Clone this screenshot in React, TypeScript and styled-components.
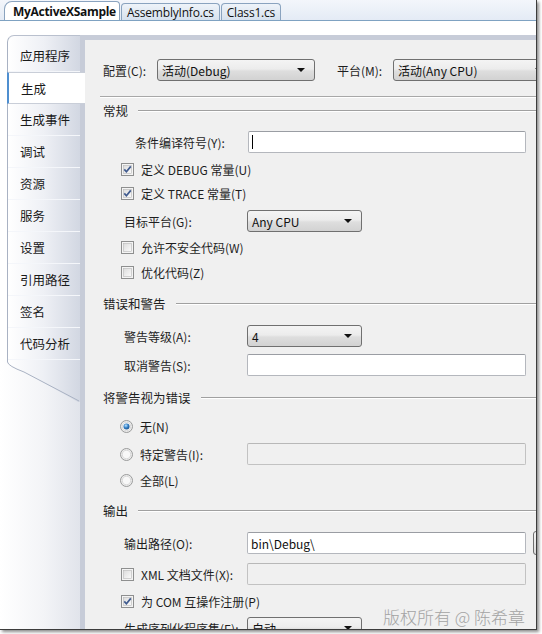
import styled, { createGlobalStyle } from 'styled-components';

/// STYLES BELOW
/** ***************************************************** */
const GlobalStyle = createGlobalStyle`
  html, body {
    margin: 0;
    padding: 0;
    background: #ffffff;
  }
  body {
    font-family: "Noto Sans CJK SC", "Liberation Sans", sans-serif;
    font-size: 12px;
    color: #1e1e1e;
  }
`;

const Viewport = styled.div`
  width: 542px;
  height: 634px;
  overflow: hidden;
  position: relative;
`;

const Window = styled.div`
  width: 536px;
  height: 629px;
  border-right: 1px solid #3c3c3c;
  border-bottom: 1px solid #3c3c3c;
  box-shadow: 2px 2px 3px rgba(0, 0, 0, 0.45);
  display: flex;
  flex-direction: column;
  overflow: hidden;
  background: #ffffff;
`;

const TabStrip = styled.div`
  height: 20px;
  flex: none;
  display: flex;
  align-items: flex-end;
  padding-left: 4px;
  gap: 1px;
  background: linear-gradient(#f3f6fb, #e4ebf5);
  border-bottom: 1px solid #7fa2c2;
`;

const DocTab = styled.div<{ active?: boolean }>`
  height: ${(p) => (p.active ? 19 : 17)}px;
  box-sizing: border-box;
  padding: 0 ${(p) => (p.active ? 3 : 5)}px 0 ${(p) => (p.active ? 8 : 5)}px;
  display: flex;
  align-items: center;
  border: 1px solid #8aa3bf;
  border-bottom: none;
  border-radius: ${(p) => (p.active ? '8px 4px 0 0' : '4px 4px 0 0')};
  background: ${(p) => (p.active ? '#ffffff' : 'linear-gradient(#eef3f9, #d6e1ee)')};
  font-family: "Open Sans", "Liberation Sans", sans-serif;
  font-size: 12px;
  font-weight: ${(p) => (p.active ? 700 : 400)};
  letter-spacing: ${(p) => (p.active ? '-0.3px' : '-0.2px')};
  color: #111;
  white-space: nowrap;
`;

const Designer = styled.div`
  flex: 1;
  display: flex;
  padding-top: 14px;
  min-height: 0;
`;

const LeftColumn = styled.div`
  width: 80px;
  flex: none;
  display: flex;
  flex-direction: column;
`;

const NavList = styled.div`
  margin-left: 7px;
  border-left: 1px solid #a9b2c3;
  border-top: 1px solid #b9c0ce;
  border-top-left-radius: 7px;
  background: linear-gradient(90deg, #ffffff 0%, #eef0f5 50%, #d2d7e2 100%);
  padding-top: 4px;
  display: flex;
  flex-direction: column;
`;

const NavItem = styled.div<{ selected?: boolean }>`
  height: 32px;
  box-sizing: border-box;
  display: flex;
  align-items: center;
  padding-left: 12px;
  font-size: 12.5px;
  color: #1a1a1a;
  position: relative;
  margin-right: ${(p) => (p.selected ? -5 : 0)}px;
  margin-left: ${(p) => (p.selected ? -1 : 0)}px;
  background: ${(p) => (p.selected ? '#ffffff' : 'transparent')};
  border-left: ${(p) => (p.selected ? '2px solid #4f8fd0' : 'none')};
  border-top: ${(p) => (p.selected ? '1px solid #c9ced8' : 'none')};
  border-bottom: 1px solid ${(p) => (p.selected ? '#c9ced8' : '#f4f6fa')};
  z-index: ${(p) => (p.selected ? 2 : 1)};
`;

const NavTail = styled.svg`
  display: block;
  flex: none;
`;

const NavFiller = styled.div`
  flex: 1;
  background: linear-gradient(90deg, #ffffff 0%, #f3f4f7 55%, #e1e4eb 100%);
`;

const Frame = styled.div`
  flex: 1;
  min-width: 0;
  display: flex;
  background: #c7ccd8;
  padding: 5px 0 0 5px;
`;

const Content = styled.div`
  flex: 1;
  min-width: 0;
  background: #f0f0f0;
  overflow: hidden;
  display: flex;
  flex-direction: column;
  padding-left: 18px;
  padding-top: 19px;
`;

const Row = styled.div<{ mt: number; indent?: number }>`
  height: 22px;
  flex: none;
  margin-top: ${(p) => p.mt}px;
  padding-left: ${(p) => p.indent ?? 0}px;
  display: flex;
  align-items: center;
  white-space: nowrap;
`;

const ConfigBar = styled.div`
  flex: none;
  padding-bottom: 15px;
  border-bottom: 1px solid #a8a8a8;
  box-shadow: 0 1px 0 #ffffff;
  margin-left: -3px;
  padding-left: 3px;
`;

const Label = styled.span<{ w?: number; ml?: number }>`
  width: ${(p) => (p.w ? `${p.w}px` : 'auto')};
  margin-left: ${(p) => p.ml ?? 0}px;
  flex: none;
  color: #1e1e1e;
`;

const SectionHeader = styled.div<{ mt: number }>`
  height: 22px;
  flex: none;
  margin-top: ${(p) => p.mt}px;
  display: flex;
  align-items: center;
  gap: 10px;
  font-size: 12.5px;
  &::after {
    content: '';
    flex: 1;
    height: 1px;
    background: #a0a0a0;
    box-shadow: 0 1px 0 #ffffff;
  }
`;

const Select = styled.div<{ w: number }>`
  width: ${(p) => p.w}px;
  height: 22px;
  box-sizing: border-box;
  flex: none;
  border: 1px solid #707070;
  border-radius: 3px;
  background: linear-gradient(#f4f4f4 0%, #ececec 45%, #dedede 55%, #d2d2d2 100%);
  display: flex;
  align-items: center;
  padding: 0 9px 0 4px;
  justify-content: space-between;
  color: #111;
`;

const Arrow = styled.span`
  width: 0;
  height: 0;
  border-left: 4px solid transparent;
  border-right: 4px solid transparent;
  border-top: 4px solid #111;
`;

const TextBox = styled.div<{ w: number; disabled?: boolean }>`
  width: ${(p) => p.w}px;
  height: 22px;
  box-sizing: border-box;
  flex: none;
  border: 1px solid ${(p) => (p.disabled ? '#c2c2c2' : '#b4b7bd')};
  border-top-color: ${(p) => (p.disabled ? '#b8b8b8' : '#9a9da3')};
  border-radius: 2px;
  background: ${(p) => (p.disabled ? '#f0f0f0' : '#ffffff')};
  display: flex;
  align-items: center;
  padding-left: 3px;
  color: #111;
`;

const Caret = styled.span`
  width: 1px;
  height: 14px;
  background: #000;
`;

const SideButton = styled.div`
  width: 20px;
  height: 24px;
  box-sizing: border-box;
  flex: none;
  margin-left: 7px;
  border: 1px solid #707070;
  border-radius: 3px;
  background: linear-gradient(#f4f4f4, #dcdcdc);
`;

const Check = styled.label<{ w?: number }>`
  width: ${(p) => (p.w ? `${p.w}px` : 'auto')};
  flex: none;
  display: flex;
  align-items: center;
  gap: 7px;
  color: #1e1e1e;
`;

const Box = styled.svg`
  flex: none;
  display: block;
`;

const Watermark = styled.div`
  position: absolute;
  left: 383px;
  top: 604px;
  font-size: 17px;
  color: #a3a3a3;
  font-weight: 300;
  white-space: nowrap;
`;

/// PARTS BELOW
/** ***************************************************** */
const NAV_ITEMS = ['应用程序', '生成', '生成事件', '调试', '资源', '服务', '设置', '引用路径', '签名', '代码分析'];

function CheckBox({ checked }: { checked?: boolean }) {
  return (
    <Box width="13" height="13" viewBox="0 0 13 13">
      <defs>
        <linearGradient id="cbg" x1="0" y1="0" x2="1" y2="1">
          <stop offset="0" stopColor="#dcdcdc" />
          <stop offset="1" stopColor="#fbfbfb" />
        </linearGradient>
      </defs>
      <rect x="0.5" y="0.5" width="12" height="12" fill="#f4f4f4" stroke="#8e8f8f" />
      <rect x="2.5" y="2.5" width="8" height="8" fill="url(#cbg)" stroke="#b8b8b8" strokeWidth="0.6" />
      {checked && <path d="M3.3 6.4 L5.4 8.8 L9.8 3.4" fill="none" stroke="#3f5a8e" strokeWidth="1.7" />}
    </Box>
  );
}

function Radio({ checked }: { checked?: boolean }) {
  return (
    <Box width="13" height="13" viewBox="0 0 13 13">
      <defs>
        <radialGradient id="rdot" cx="0.4" cy="0.35" r="0.7">
          <stop offset="0" stopColor="#bfe4ff" />
          <stop offset="0.55" stopColor="#2e7cc4" />
          <stop offset="1" stopColor="#1f4f85" />
        </radialGradient>
      </defs>
      <circle cx="6.5" cy="6.5" r="6" fill="#ececec" stroke="#9a9b9b" />
      <circle cx="6.5" cy="6.5" r="4.2" fill="#f8f8f8" stroke="#cacaca" strokeWidth="0.6" />
      {checked && <circle cx="6.5" cy="6.5" r="3" fill="url(#rdot)" />}
    </Box>
  );
}

///  COMPONENT BELOW
/** ***************************************************** */
export default function App() {
  return (
    <Viewport>
      <GlobalStyle />
      <Window>
        <TabStrip>
          <DocTab active>MyActiveXSample</DocTab>
          <DocTab>AssemblyInfo.cs</DocTab>
          <DocTab>Class1.cs</DocTab>
        </TabStrip>

        <Designer>
          <LeftColumn>
            <NavList>
              {NAV_ITEMS.map((item) => (
                <NavItem key={item} selected={item === '生成'}>
                  {item}
                </NavItem>
              ))}
            </NavList>
            <NavTail width="80" height="42" viewBox="0 0 80 42">
              <defs>
                <linearGradient id="tailbg" x1="0" y1="0" x2="1" y2="0">
                  <stop offset="0" stopColor="#ffffff" />
                  <stop offset="0.55" stopColor="#f3f4f7" />
                  <stop offset="1" stopColor="#e1e4eb" />
                </linearGradient>
                <linearGradient id="tailtab" x1="0" y1="0" x2="1" y2="0">
                  <stop offset="0" stopColor="#ffffff" />
                  <stop offset="0.5" stopColor="#eef0f5" />
                  <stop offset="1" stopColor="#d2d7e2" />
                </linearGradient>
              </defs>
              <rect x="0" y="0" width="80" height="42" fill="url(#tailbg)" />
              <path d="M7 0 L80 0 L80 42 L78 42 L24 12 Q7 6 7 2 Z" fill="url(#tailtab)" />
              <path d="M7.5 0 L7.5 2 Q8 6 24 12 L79 41" fill="none" stroke="#a9b2c3" />
            </NavTail>
            <NavFiller />
          </LeftColumn>

          <Frame>
            <Content>
              <ConfigBar>
                <Row mt={0}>
                  <Label w={54}>配置(C):</Label>
                  <Select w={158}>
                    活动(Debug)
                    <Arrow />
                  </Select>
                  <Label w={56} ml={22}>
                    平台(M):
                  </Label>
                  <Select w={160}>
                    活动(Any CPU)
                    <Arrow />
                  </Select>
                </Row>
              </ConfigBar>

              <SectionHeader mt={2}>常规</SectionHeader>
              <Row mt={10} indent={32}>
                <Label w={113}>条件编译符号(Y):</Label>
                <TextBox w={278}>
                  <Caret />
                </TextBox>
              </Row>
              <Row mt={5} indent={18}>
                <Check>
                  <CheckBox checked />
                  定义 DEBUG 常量(U)
                </Check>
              </Row>
              <Row mt={2} indent={18}>
                <Check>
                  <CheckBox checked />
                  定义 TRACE 常量(T)
                </Check>
              </Row>
              <Row mt={6} indent={21}>
                <Label w={123}>目标平台(G):</Label>
                <Select w={115}>
                  Any CPU
                  <Arrow />
                </Select>
              </Row>
              <Row mt={4} indent={18}>
                <Check>
                  <CheckBox />
                  允许不安全代码(W)
                </Check>
              </Row>
              <Row mt={3} indent={18}>
                <Check>
                  <CheckBox />
                  优化代码(Z)
                </Check>
              </Row>

              <SectionHeader mt={9}>错误和警告</SectionHeader>
              <Row mt={11} indent={21}>
                <Label w={123}>警告等级(A):</Label>
                <Select w={115}>
                  4
                  <Arrow />
                </Select>
              </Row>
              <Row mt={7} indent={21}>
                <Label w={123}>取消警告(S):</Label>
                <TextBox w={279} />
              </Row>

              <SectionHeader mt={10}>将警告视为错误</SectionHeader>
              <Row mt={7} indent={17}>
                <Check>
                  <Radio checked />
                  无(N)
                </Check>
              </Row>
              <Row mt={6} indent={17}>
                <Check w={127}>
                  <Radio />
                  特定警告(I):
                </Check>
                <TextBox w={279} disabled />
              </Row>
              <Row mt={4} indent={17}>
                <Check>
                  <Radio />
                  全部(L)
                </Check>
              </Row>

              <SectionHeader mt={8}>输出</SectionHeader>
              <Row mt={11} indent={21}>
                <Label w={123}>输出路径(O):</Label>
                <TextBox w={279}>bin\Debug\</TextBox>
                <SideButton />
              </Row>
              <Row mt={9} indent={18}>
                <Check w={126}>
                  <CheckBox />
                  XML 文档文件(X):
                </Check>
                <TextBox w={279} disabled />
              </Row>
              <Row mt={5} indent={18}>
                <Check>
                  <CheckBox checked />
                  为 COM 互操作注册(P)
                </Check>
              </Row>
              <Row mt={5} indent={21}>
                <Label w={123}>生成序列化程序集(E):</Label>
                <Select w={115}>
                  自动
                  <Arrow />
                </Select>
              </Row>
            </Content>
          </Frame>
        </Designer>
      </Window>
      <Watermark>版权所有 @ 陈希章</Watermark>
    </Viewport>
  );
}
